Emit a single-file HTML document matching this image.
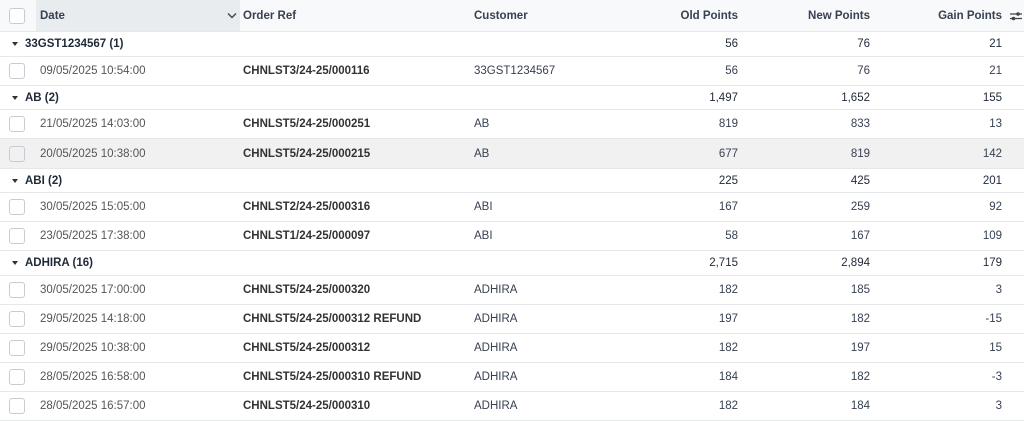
<!DOCTYPE html>
<html><head><meta charset="utf-8"><style>
*{box-sizing:border-box;margin:0;padding:0}
body{width:1024px;height:416px;overflow:hidden;background:#fff;font-family:"Liberation Sans",sans-serif;font-size:11.5px;color:#374151;position:relative}
.r{position:absolute;left:0;width:1024px;border-bottom:1px solid #e5e7eb}
.r span{position:absolute;top:50%;transform:translateY(-50%);white-space:nowrap}
.cb{position:absolute;left:9px;top:50%;transform:translateY(-50%);width:16px;height:16px;border:1px solid #c8ccd2;border-radius:3px;background:#fff}
.hd{background:#f8f9fa;font-weight:bold;color:#374151}
.g{font-weight:bold;color:#1f2937}
.d .dt{left:40px;color:#555}
.ref{left:243px;font-weight:bold;color:#333}
.cu{left:474px}
.o{right:286px}.n{right:154px}.gp{right:22px}
.tri{position:absolute;left:12px;top:50%;margin-top:-2px;border-left:3.5px solid transparent;border-right:3.5px solid transparent;border-top:4px solid #333}
</style></head><body>
<div class="r hd" style="top:0;height:32px">
<div style="position:absolute;left:36px;top:0;width:204px;height:31px;background:#e9ecef"></div>
<div class="cb"></div>
<span style="left:40px">Date</span>
<svg style="position:absolute;left:227px;top:12px" width="10" height="7" viewBox="0 0 10 7"><path d="M1 1.5L5 5.5L9 1.5" stroke="#444" stroke-width="1.4" fill="none"/></svg>
<span style="left:243px">Order Ref</span>
<span style="left:474px">Customer</span>
<span class="o">Old Points</span><span class="n">New Points</span><span class="gp">Gain Points</span>
<svg style="position:absolute;left:1010px;top:10px" width="12" height="12" viewBox="0 0 12 12"><path d="M0 4h12M0 8.5h12" stroke="#444" stroke-width="1.2"/><circle cx="8" cy="4" r="1.8" fill="#444"/><circle cx="3.5" cy="8.5" r="1.8" fill="#444"/></svg>
</div>
<div class="r g" style="top:32px;height:25px"><div class="tri"></div><span style="left:25px">33GST1234567 (1)</span><span class="o" style="font-weight:normal">56</span><span class="n" style="font-weight:normal">76</span><span class="gp" style="font-weight:normal">21</span></div>
<div class="r d" style="top:57px;height:29px"><div class="cb"></div><span class="dt">09/05/2025 10:54:00</span><span class="ref">CHNLST3/24-25/000116</span><span class="cu">33GST1234567</span><span class="o">56</span><span class="n">76</span><span class="gp">21</span></div>
<div class="r g" style="top:86px;height:24px"><div class="tri"></div><span style="left:25px">AB (2)</span><span class="o" style="font-weight:normal">1,497</span><span class="n" style="font-weight:normal">1,652</span><span class="gp" style="font-weight:normal">155</span></div>
<div class="r d" style="top:110px;height:29px"><div class="cb"></div><span class="dt">21/05/2025 14:03:00</span><span class="ref">CHNLST5/24-25/000251</span><span class="cu">AB</span><span class="o">819</span><span class="n">833</span><span class="gp">13</span></div>
<div class="r d" style="top:139px;height:30px;background:#f1f1f1"><div class="cb" style="background:#f1f1f1"></div><span class="dt">20/05/2025 10:38:00</span><span class="ref">CHNLST5/24-25/000215</span><span class="cu">AB</span><span class="o">677</span><span class="n">819</span><span class="gp">142</span></div>
<div class="r g" style="top:169px;height:24px"><div class="tri"></div><span style="left:25px">ABI (2)</span><span class="o" style="font-weight:normal">225</span><span class="n" style="font-weight:normal">425</span><span class="gp" style="font-weight:normal">201</span></div>
<div class="r d" style="top:193px;height:29px"><div class="cb"></div><span class="dt">30/05/2025 15:05:00</span><span class="ref">CHNLST2/24-25/000316</span><span class="cu">ABI</span><span class="o">167</span><span class="n">259</span><span class="gp">92</span></div>
<div class="r d" style="top:222px;height:29px"><div class="cb"></div><span class="dt">23/05/2025 17:38:00</span><span class="ref">CHNLST1/24-25/000097</span><span class="cu">ABI</span><span class="o">58</span><span class="n">167</span><span class="gp">109</span></div>
<div class="r g" style="top:251px;height:25px"><div class="tri"></div><span style="left:25px">ADHIRA (16)</span><span class="o" style="font-weight:normal">2,715</span><span class="n" style="font-weight:normal">2,894</span><span class="gp" style="font-weight:normal">179</span></div>
<div class="r d" style="top:276px;height:29px"><div class="cb"></div><span class="dt">30/05/2025 17:00:00</span><span class="ref">CHNLST5/24-25/000320</span><span class="cu">ADHIRA</span><span class="o">182</span><span class="n">185</span><span class="gp">3</span></div>
<div class="r d" style="top:305px;height:29px"><div class="cb"></div><span class="dt">29/05/2025 14:18:00</span><span class="ref">CHNLST5/24-25/000312 REFUND</span><span class="cu">ADHIRA</span><span class="o">197</span><span class="n">182</span><span class="gp">-15</span></div>
<div class="r d" style="top:334px;height:29px"><div class="cb"></div><span class="dt">29/05/2025 10:38:00</span><span class="ref">CHNLST5/24-25/000312</span><span class="cu">ADHIRA</span><span class="o">182</span><span class="n">197</span><span class="gp">15</span></div>
<div class="r d" style="top:363px;height:29px"><div class="cb"></div><span class="dt">28/05/2025 16:58:00</span><span class="ref">CHNLST5/24-25/000310 REFUND</span><span class="cu">ADHIRA</span><span class="o">184</span><span class="n">182</span><span class="gp">-3</span></div>
<div class="r d" style="top:392px;height:29px"><div class="cb"></div><span class="dt">28/05/2025 16:57:00</span><span class="ref">CHNLST5/24-25/000310</span><span class="cu">ADHIRA</span><span class="o">182</span><span class="n">184</span><span class="gp">3</span></div>
</body></html>
